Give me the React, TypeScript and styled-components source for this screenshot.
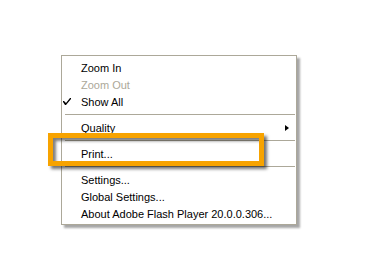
import React from 'react';
import styled, { createGlobalStyle } from 'styled-components';

const GlobalStyle = createGlobalStyle`
  html, body {
    margin: 0;
    padding: 0;
    background: #ffffff;
  }
  body {
    font-family: "Liberation Sans", Arial, sans-serif;
    font-size: 11px;
  }
`;

const Page = styled.div`
  width: 384px;
  height: 280px;
  box-sizing: border-box;
  padding: 55px 0 0 61px;
  background: #ffffff;
`;

const Menu = styled.div`
  /* relative so the highlight frame can sit over it */
  position: relative;
  width: 236px;
  box-sizing: border-box;
  background: #ffffff;
  border: 1px solid #aca899;
  padding: 3px 0 2px 0;
  box-shadow: 3px 3px 2px rgba(0, 0, 0, 0.35);
`;

const Item = styled.div<{ disabled?: boolean }>`
  position: relative;
  display: flex;
  align-items: center;
  height: 17px;
  padding: 0 0 0 19px;
  color: ${(props) => (props.disabled ? '#aca899' : '#000000')};
  white-space: nowrap;
`;

const Check = styled.svg`
  position: absolute;
  left: 1px;
  top: 5px;
`;

const Arrow = styled.span`
  margin-left: auto;
  margin-right: 7px;
  width: 0;
  height: 0;
  border-top: 3.5px solid transparent;
  border-bottom: 3.5px solid transparent;
  border-left: 4px solid #000000;
`;

const Separator = styled.div`
  height: 1px;
  margin: 4px 1px 4px 3px;
  background: #aca899;
`;

const Highlight = styled.div`
  position: absolute;
  left: -14px;
  top: 77px;
  width: 216px;
  height: 33px;
  box-sizing: border-box;
  border: 5px solid #f7a300;
  pointer-events: none;
  box-shadow: 3px 3px 3px rgba(0, 0, 0, 0.55), inset 3px 3px 3px rgba(0, 0, 0, 0.5);
`;

export default function App() {
  return (
    <>
      <GlobalStyle />
      <Page>
        <Menu>
          <Item>Zoom In</Item>
          <Item disabled>Zoom Out</Item>
          <Item>
            <Check width="8" height="7" viewBox="0 0 8 7">
              <path d="M0 3 L1 3 L3 5 L7 0 L8 0 L8 1 L3 7 L2 7 L0 4 Z" fill="#000" />
            </Check>
            Show All
          </Item>
          <Separator />
          <Item>
            Quality
            <Arrow />
          </Item>
          <Separator />
          <Item>Print...</Item>
          <Separator />
          <Item>Settings...</Item>
          <Item>Global Settings...</Item>
          <Item>About Adobe Flash Player 20.0.0.306...</Item>
          <Highlight />
        </Menu>
      </Page>
    </>
  );
}
